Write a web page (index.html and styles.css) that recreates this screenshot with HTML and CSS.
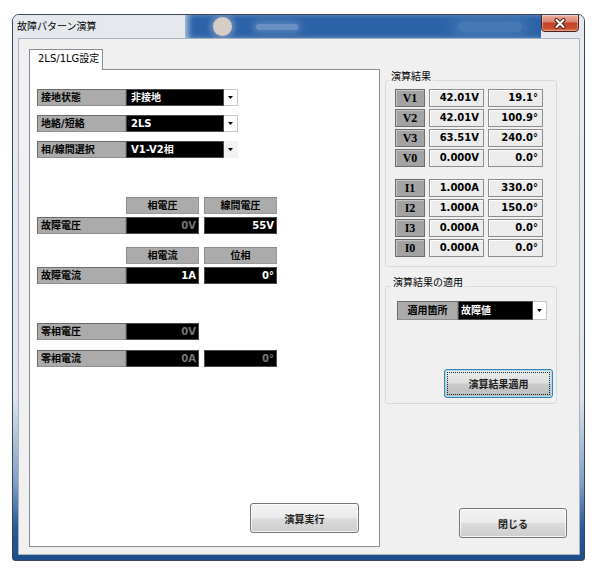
FILE: index.html
```html
<!DOCTYPE html>
<html lang="ja">
<head>
<meta charset="utf-8">
<title>故障パターン演算</title>
<link rel="stylesheet" href="styles.css">
</head>
<body>
<div class="window">
  <div class="titlebar">
    <span class="title">故障パターン演算</span>
    <span class="glass"><span class="orb"></span><span class="blur"></span><span class="glow"></span></span>
    <button class="close" aria-label="閉じる">
      <svg width="14" height="11" viewBox="0 0 14 11"><path d="M3.5 2 L10.5 9 M10.5 2 L3.5 9" stroke="#4a1c14" stroke-width="4" stroke-linecap="round" fill="none"/><path d="M3.5 2 L10.5 9 M10.5 2 L3.5 9" stroke="#fff" stroke-width="2.2" stroke-linecap="round" fill="none"/></svg>
    </button>
  </div>
  <div class="client">
    <div class="tabs">
      <div class="tabstrip"><div class="tab">2LS/1LG設定</div></div>
      <div class="panel">
        <div class="combos">
          <div class="row"><span class="lbl">接地状態</span><span class="combo">非接地</span><span class="arrow"><svg width="5" height="3" viewBox="0 0 5 3"><path d="M0 0H5L2.5 3Z"/></svg></span></div>
          <div class="row"><span class="lbl">地絡/短絡</span><span class="combo">2LS</span><span class="arrow"><svg width="5" height="3" viewBox="0 0 5 3"><path d="M0 0H5L2.5 3Z"/></svg></span></div>
          <div class="row"><span class="lbl">相/線間選択</span><span class="combo">V1-V2相</span><span class="arrow off"><svg width="5" height="3" viewBox="0 0 5 3"><path d="M0 0H5L2.5 3Z"/></svg></span></div>
        </div>
        <div class="pair sec1">
          <div class="row heads"><span class="head">相電圧</span><span class="head">線間電圧</span></div>
          <div class="row"><span class="lbl">故障電圧</span><span class="val dim">0V</span><span class="val">55V</span></div>
        </div>
        <div class="pair sec2">
          <div class="row heads"><span class="head">相電流</span><span class="head">位相</span></div>
          <div class="row"><span class="lbl">故障電流</span><span class="val">1A</span><span class="val">0°</span></div>
        </div>
        <div class="zero">
          <div class="row"><span class="lbl">零相電圧</span><span class="val dim">0V</span></div>
          <div class="row"><span class="lbl">零相電流</span><span class="val dim">0A</span><span class="val dim">0°</span></div>
        </div>
        <button class="btn run">演算実行</button>
      </div>
    </div>
    <div class="side">
      <fieldset class="group g1">
        <legend>演算結果</legend>
        <div class="grid">
          <span class="k">V1</span><span class="v">42.01V</span><span class="v">19.1°</span>
          <span class="k">V2</span><span class="v">42.01V</span><span class="v">100.9°</span>
          <span class="k">V3</span><span class="v">63.51V</span><span class="v">240.0°</span>
          <span class="k">V0</span><span class="v">0.000V</span><span class="v">0.0°</span>
        </div>
        <div class="grid">
          <span class="k">I1</span><span class="v">1.000A</span><span class="v">330.0°</span>
          <span class="k">I2</span><span class="v">1.000A</span><span class="v">150.0°</span>
          <span class="k">I3</span><span class="v">0.000A</span><span class="v">0.0°</span>
          <span class="k">I0</span><span class="v">0.000A</span><span class="v">0.0°</span>
        </div>
      </fieldset>
      <fieldset class="group g2">
        <legend>演算結果の適用</legend>
        <div class="g2body">
          <div class="row apply-row"><span class="lbl short">適用箇所</span><span class="combo narrow">故障値</span><span class="arrow"><svg width="5" height="3" viewBox="0 0 5 3"><path d="M0 0H5L2.5 3Z"/></svg></span></div>
          <button class="btn apply">演算結果適用</button>
        </div>
      </fieldset>
      <button class="btn closebtn">閉じる</button>
    </div>
  </div>
</div>
</body>
</html>
```

FILE: styles.css
```css
* { box-sizing: border-box; }
html, body { margin: 0; }
body {
  padding: 14px 0 0 12px;
  background: #fff;
  font-family: "DejaVu Sans", "Noto Sans CJK JP", sans-serif;
  font-size: 10px;
  color: #000;
}

.window {
  width: 573px;
  height: 547px;
  border: 1px solid #3b4756;
  border-radius: 7px 7px 3px 3px;
  display: flex;
  flex-direction: column;
  background-color: #dfe5ec;
  background-image: linear-gradient(180deg, #e8ecf1 0%, #dfe5ec 70%, #7f9fc6 86%, #2a5a98 94%, #1d4c8a 100%);
}

.titlebar {
  height: 23px;
  display: flex;
  align-items: flex-start;
  padding: 0 5px 0 4px;
  border-radius: 6px 6px 0 0;
  background: #e5e9ee;
  overflow: hidden;
}
.title {
  width: 168px;
  flex: none;
  font-family: "Noto Sans CJK JP", sans-serif;
  font-size: 10px;
  line-height: 21px;
  color: #000;
}
/* blurred desktop seen through the glass frame */
.glass {
  flex: 1;
  align-self: stretch;
  display: flex;
  align-items: center;
  padding-left: 28px;
  background-color: #2c63a8;
  box-shadow: inset 5px 0 6px -2px #b9cbe1;
}
.orb {
  width: 19px;
  height: 19px;
  border-radius: 50%;
  background-color: #d6cec5;
  box-shadow: 0 0 5px 3px rgba(120, 150, 190, 0.8);
}
.blur {
  margin-left: 24px;
  width: 42px;
  height: 6px;
  border-radius: 3px;
  background-color: #6a90c3;
  box-shadow: 0 0 6px 3px rgba(106, 144, 195, 0.7);
}
.glow {
  margin-left: 160px;
  width: 64px;
  height: 10px;
  border-radius: 5px;
  background-color: #4779b6;
  box-shadow: 0 0 12px 6px rgba(71, 121, 182, 0.8);
}
.close {
  margin-top: -1px;
  flex: none;
  width: 38px;
  height: 18px;
  padding: 0;
  border: 1px solid #4e1f19;
  border-radius: 0 0 4px 4px;
  background: linear-gradient(#eab0a2 0%, #dc8470 42%, #c5422a 52%, #c94a2f 80%, #de7454 100%);
  box-shadow: inset 0 0 0 1px rgba(255, 255, 255, 0.35);
  display: flex;
  align-items: center;
  justify-content: center;
}

.client {
  flex: 1;
  margin: 0 4px 5px 5px;
  border: 1px solid #a9b2bd;
  background: #f0f0f0;
  display: flex;
  gap: 5px;
  padding: 10px 12px 7px 10px;
}

/* tab control */
.tabs {
  width: 351px;
  display: flex;
  flex-direction: column;
}
.tabstrip {
  height: 21px;
  display: flex;
  border-bottom: 1px solid #898c95;
}
.tab {
  position: relative;
  width: 74px;
  height: 21px;
  margin-bottom: -1px;
  border: 1px solid #898c95;
  border-bottom: none;
  background: #fff;
  padding-left: 8px;
  line-height: 17px;
  font-size: 10px;
}
.panel {
  flex: 1;
  background: #fff;
  border: 1px solid #898c95;
  border-top: none;
  display: flex;
  flex-direction: column;
  padding: 19px 0 0 7px;
}

.row { display: flex; height: 17px; }
.combos { display: flex; flex-direction: column; gap: 9px; }
.pair { display: flex; flex-direction: column; gap: 3px; }
.sec1 { margin-top: 39px; }
.sec2 { margin-top: 13px; }
.zero { margin-top: 39px; display: flex; flex-direction: column; gap: 10px; }

.lbl {
  width: 89px;
  background: #ababab;
  border: 1px solid;
  border-color: #6c6c6c #8e8e8e #8e8e8e #6c6c6c;
  font-weight: bold;
  padding-left: 3px;
  line-height: 15px;
  white-space: nowrap;
}
.combo {
  width: 98px;
  background: #000;
  color: #fff;
  font-weight: bold;
  padding-left: 4px;
  line-height: 15px;
  border: 1px solid #4a4a4a;
}
.arrow {
  width: 14px;
  background: #fff;
  border: 1px solid #c4c6ca;
  border-left: none;
  display: flex;
  align-items: center;
  justify-content: center;
}
.arrow.off { background: #f2f2f2; border-color: #f2f2f2; }

.heads { padding-left: 89px; }
.head, .val { width: 73px; }
.head + .head, .val + .val { margin-left: 5px; }
.head {
  background: #ababab;
  border: 1px solid;
  border-color: #8a8a8a #9a9a9a #9a9a9a #8a8a8a;
  font-weight: bold;
  text-align: center;
  line-height: 15px;
}
.val {
  background: #000;
  color: #fff;
  font-weight: bold;
  text-align: right;
  padding-right: 2px;
  line-height: 15px;
  border: 1px solid #4a4a4a;
}
.val.dim { color: #777; }

/* buttons */
.btn {
  font-family: "DejaVu Sans", "Noto Sans CJK JP", sans-serif;
  font-size: 10px;
  font-weight: bold;
  color: #1e1e1e;
  padding: 0;
  border: 1px solid #767676;
  border-radius: 3px;
  background: linear-gradient(#f3f3f3 0%, #ebebeb 48%, #dcdcdc 52%, #cdcdcd 100%);
  box-shadow: inset 0 0 0 1px rgba(255, 255, 255, 0.75);
}
.run {
  margin-top: auto;
  align-self: flex-end;
  margin-right: 20px;
  margin-bottom: 13px;
  width: 109px;
  height: 30px;
}

/* side column */
.side {
  width: 182px;
  display: flex;
  flex-direction: column;
}
.group {
  width: 172px;
  margin: 0;
  border: 1px solid #d3dbe2;
  border-radius: 3px;
  min-width: 0;
}
.group legend {
  padding: 0 2px 8px;
  line-height: 10px;
  font-family: "Noto Sans CJK JP", sans-serif;
  font-size: 10px;
  color: #000;
}
.g1 { margin-top: 22px; padding: 0 0 9px 9px; }
.g1 legend { margin-left: -6px; }
.grid {
  display: grid;
  grid-template-columns: 30px 55px 55px;
  grid-auto-rows: 18px;
  gap: 2px 4px;
}
.grid + .grid { margin-top: 12px; }
.k {
  background: #a3a3a3;
  border: 1px solid #6c6c6c;
  box-shadow: inset 1px 1px 0 #c6c6c6;
  font-family: "Liberation Serif", serif;
  font-weight: bold;
  font-size: 12px;
  text-align: center;
  line-height: 16px;
}
.v {
  background: #ececec;
  border: 1px solid #8c8c8c;
  box-shadow: inset 1px 1px 0 #fff;
  font-weight: bold;
  text-align: right;
  padding-right: 4px;
  line-height: 16px;
}

.g2 { margin-top: 10px; padding: 0 3px 5px 11px; }
.g2 legend { margin-left: -6px; }
.g2body { display: flex; flex-direction: column; }
.apply-row { margin-top: 6px; height: 19px; }
.apply-row .lbl { line-height: 17px; }
.apply-row .combo { line-height: 17px; }
.lbl.short { width: 61px; text-align: center; padding-left: 0; }
.combo.narrow { width: 75px; padding-left: 2px; }
.apply {
  margin-top: 49px;
  align-self: flex-end;
  width: 109px;
  height: 29px;
  border-color: #3c7fb1;
  background: linear-gradient(#ececec 0%, #dedede 48%, #cbcbcb 52%, #bcbcbc 100%);
  box-shadow: inset 0 0 0 1px #9fdcf5;
  outline: 1px dotted #222;
  outline-offset: -4px;
}
.closebtn {
  margin-top: auto;
  align-self: flex-end;
  margin-bottom: 9px;
  width: 108px;
  height: 30px;
}
```
